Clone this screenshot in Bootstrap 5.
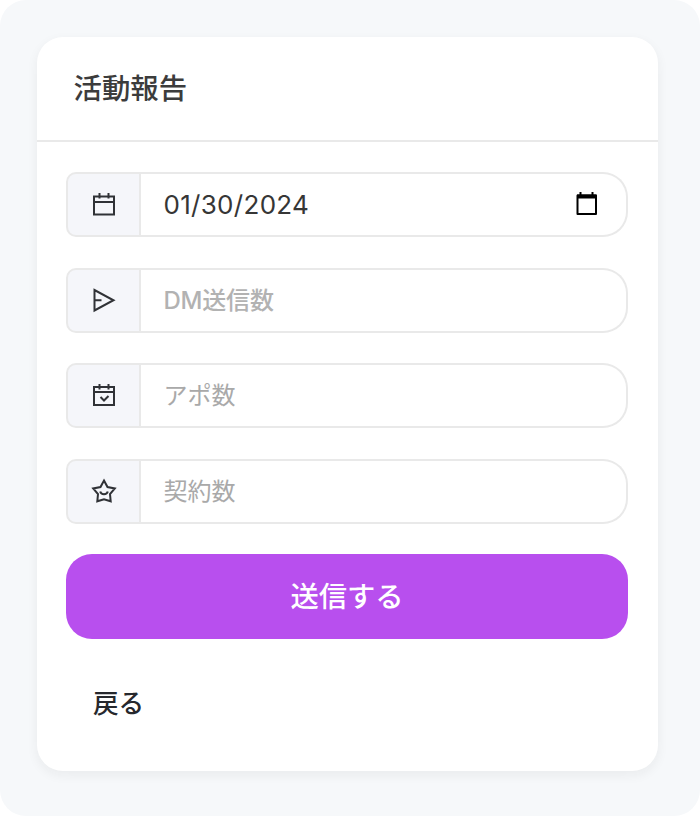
<!DOCTYPE html>
<html lang="ja">
<head>
<meta charset="utf-8">
<meta name="viewport" content="width=device-width, initial-scale=1">
<title>活動報告</title>
<link href="https://cdn.jsdelivr.net/npm/bootstrap@5.3.0/dist/css/bootstrap.min.css" rel="stylesheet">
<style>
body { background: #fff; font-family: Inter, "Noto Sans CJK JP", sans-serif; color: #363636; }
.page-shell { height: 816px; border-radius: 26px; background: #f6f8fa; padding: 37px 42px 45px 36.5px; }
.report-card { height: 734px; border-radius: 26px; box-shadow: 0 4px 12px rgba(40, 40, 40, .06); }
.report-head { height: 104.5px; border-bottom: 2px solid #e9e9e9; padding: 2px 37px 0; }
.report-title { font-size: 28.4px; line-height: 1.4; font-weight: 500; color: #3c3c3c; }
.report-body { padding: 30.5px 30px 0 29.5px; }
.report-form { gap: 30.4px; }
.field { height: 65.2px; flex-wrap: nowrap; }
.field .input-group-text { width: 75px; background: #f5f6fa; border: 2px solid #e9e9e9; border-radius: 10px 0 0 10px; color: #303236; padding: 0; }
.field .form-control { border: 2px solid #e9e9e9; border-left: 0; border-radius: 0 25px 25px 0; padding: 1px 22px 0 22.5px; font-size: 24px; font-weight: 400; color: #363636; box-shadow: none; margin-left: 0 !important; }
.field .form-control::placeholder { color: #a9a9a9; opacity: 1; }
.field .latin-lead { font-weight: 500; }
.field .latin-lead::placeholder { letter-spacing: -.2px; color: #b2b2b2; }
.field .date-value { font-size: 26px; font-weight: 400; letter-spacing: .3px; padding: 0 27px 1px 22.5px; }
.submit-btn { height: 85px; border-radius: 26px; background: #b84fee; color: #fff; font-size: 28.3px; font-weight: 500; padding: 0; }
.submit-btn:hover { background: #a93fe0; color: #fff; }
.back-btn { font-size: 25.6px; line-height: 1.4; font-weight: 500; color: #26282d; margin: 16px 0 0 27px; }
</style>
</head>
<body>
<main class="page-shell">
  <section class="report-card card border-0 bg-white">
    <header class="report-head d-flex align-items-center">
      <h1 class="report-title m-0">活動報告</h1>
    </header>
    <div class="report-body">
      <form class="report-form d-flex flex-column">
        <div class="input-group field">
          <span class="input-group-text justify-content-center">
            <svg width="28" height="28" viewBox="0 0 28 28" fill="none" stroke="currentColor" stroke-width="2"><path d="M4 5.500h20v18H4zM4 11h20M9.500 2v5.500M18.500 2v5.500"/></svg>
          </span>
          <div class="form-control date-value d-flex align-items-center justify-content-between">
            <span>01/30/2024</span>
            <svg width="24" height="26" viewBox="0 0 24 26" fill="none" stroke="#000"><path d="M2.500 4.500h18.500v18.500h-18.500z" stroke-width="2" stroke-linejoin="round"/><path d="M2 5.500h19.500" stroke-width="4"/><path d="M5.500 1v3M17.500 1v3" stroke-width="2"/></svg>
          </div>
        </div>
        <div class="input-group field">
          <span class="input-group-text justify-content-center">
            <svg width="28" height="28" viewBox="0 0 28 28" fill="none" stroke="currentColor" stroke-width="2"><path d="M4.500 4v20.500L23.500 14.250zM4.500 14.250h7"/></svg>
          </span>
          <input class="form-control latin-lead" type="text" placeholder="DM送信数" aria-label="DM送信数">
        </div>
        <div class="input-group field">
          <span class="input-group-text justify-content-center">
            <svg width="28" height="28" viewBox="0 0 28 28" fill="none" stroke="currentColor" stroke-width="2"><path d="M4 5h20v18H4zM4 10h20M9.500 2v5.500M18.500 2v5.500M10.500 15l3.500 3.500 4.500-4.500"/></svg>
          </span>
          <input class="form-control" type="text" placeholder="アポ数" aria-label="アポ数">
        </div>
        <div class="input-group field">
          <span class="input-group-text justify-content-center">
            <svg width="28" height="28" viewBox="0 0 28 28" fill="none" stroke="currentColor" stroke-width="2"><path d="M14 3.500l3.500 6.500 7.300 1.500-4.800 5.500.7 7.300L14 22.200l-6.700 2.100.7-7.300-4.800-5.500 7.300-1.500zM10.200 14.500c.9 3.500 6.700 3.500 7.600 0"/></svg>
          </span>
          <input class="form-control" type="text" placeholder="契約数" aria-label="契約数">
        </div>
        <button type="button" class="btn submit-btn w-100 border-0">送信する</button>
        <a href="#" class="back-btn text-decoration-none align-self-start">戻る</a>
      </form>
    </div>
  </section>
</main>
<script src="https://cdn.jsdelivr.net/npm/bootstrap@5.3.0/dist/js/bootstrap.bundle.min.js"></script>
</body>
</html>
